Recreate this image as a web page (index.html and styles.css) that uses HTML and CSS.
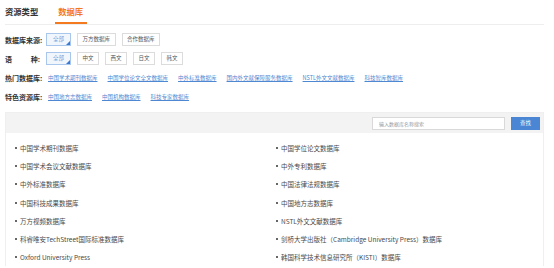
FILE: index.html
```html
<!DOCTYPE html>
<html lang="zh-CN">
<head>
<meta charset="utf-8">
<link rel="stylesheet" href="styles.css">
</head>
<body>
<div class="page">
  <div class="tabs">
    <div class="tab">资源类型</div>
    <div class="tab tab-active">数据库</div>
  </div>

  <div class="filters">
    <div class="frow">
      <div class="flabel">数据库来源:</div>
      <span class="opt opt-on">全部</span>
      <span class="opt">万方数据库</span>
      <span class="opt">合作数据库</span>
    </div>
    <div class="frow">
      <div class="flabel flabel-spread"><span>语</span><span>种:</span></div>
      <span class="opt opt-on">全部</span>
      <span class="opt">中文</span>
      <span class="opt">西文</span>
      <span class="opt">日文</span>
      <span class="opt">韩文</span>
    </div>
    <div class="frow">
      <div class="flabel">热门数据库:</div>
      <a class="lnk">中国学术期刊数据库</a>
      <a class="lnk">中国学位论文全文数据库</a>
      <a class="lnk">中外标准数据库</a>
      <a class="lnk">国内外文献保障服务数据库</a>
      <a class="lnk">NSTL外文文献数据库</a>
      <a class="lnk">科技智库数据库</a>
    </div>
    <div class="frow">
      <div class="flabel">特色资源库:</div>
      <a class="lnk">中国地方志数据库</a>
      <a class="lnk">中国机构数据库</a>
      <a class="lnk">科技专家数据库</a>
    </div>
  </div>

  <div class="panel">
    <div class="searchbar">
      <div class="sinput">输入数据库名称搜索</div>
      <div class="sbtn">查找</div>
    </div>
    <ul class="dblist">
      <li>中国学术期刊数据库</li>
      <li>中国学位论文数据库</li>
      <li>中国学术会议文献数据库</li>
      <li>中外专利数据库</li>
      <li>中外标准数据库</li>
      <li>中国法律法规数据库</li>
      <li>中国科技成果数据库</li>
      <li>中国地方志数据库</li>
      <li>万方视频数据库</li>
      <li>NSTL外文文献数据库</li>
      <li>科睿唯安TechStreet国际标准数据库</li>
      <li>剑桥大学出版社（Cambridge University Press）数据库</li>
      <li>Oxford University Press</li>
      <li>韩国科学技术信息研究所（KISTI）数据库</li>
    </ul>
  </div>
</div>
</body>
</html>
```

FILE: styles.css
```css
* { box-sizing: border-box; }
html, body {
  margin: 0;
  padding: 0;
  background: #fff;
}
body {
  font-family: "Noto Sans CJK SC", "Noto Sans", sans-serif;
  color: #333;
}
.page {
  padding: 1px 5px 0 5px;
  width: 549px;
}
.tabs {
  display: flex;
  border-bottom: 1px solid #eeeeee;
  height: 24px;
}
.tab {
  font-size: 8.3px;
  font-weight: bold;
  line-height: 21px;
  height: 23px;
  color: #333;
}
.tab-active {
  color: #f47a1f;
  border-bottom: 2px solid #f47a1f;
  margin-left: 17px;
  padding: 0 4px 0 3px;
}
.filters {
  padding-top: 5px;
}
.frow {
  display: flex;
  align-items: center;
  height: 19.2px;
}
.flabel {
  width: 41px;
  font-size: 7px;
  font-weight: bold;
  color: #333;
  flex: none;
  white-space: nowrap;
}
.flabel-spread {
  display: flex;
  justify-content: space-between;
  width: 35px;
  margin-right: 6px;
}
.opt {
  position: relative;
  height: 13px;
  line-height: 11px;
  border: 1px solid #dcdcdc;
  padding: 0 4.5px;
  font-size: 5.5px;
  color: #555;
  margin-right: 6px;
  background: #fff;
}
.opt-on {
  border-color: #a9c6ec;
  background: #f1f6fd;
  color: #6b98d6;
  padding: 0 6px;
}
.opt-on::after {
  content: "";
  position: absolute;
  right: 0;
  bottom: 0;
  border-style: solid;
  border-width: 0 0 4px 4px;
  border-color: transparent transparent #3b79d0 transparent;
}
.lnk {
  font-size: 5.5px;
  color: #4f88d2;
  text-decoration: underline;
  margin: 0 8px 0 2px;
  white-space: nowrap;
}
.panel {
  margin-top: 5.5px;
  border: 1px solid #efefef;
  border-bottom: none;
}
.searchbar {
  height: 20px;
  background: #f3f3f3;
  display: flex;
  align-items: center;
  justify-content: flex-end;
  padding-right: 3px;
}
.sinput {
  width: 133px;
  height: 13px;
  border: 1px solid #d9d9d9;
  background: #fff;
  font-size: 5px;
  line-height: 11px;
  color: #999;
  padding-left: 6px;
}
.sbtn {
  width: 29px;
  height: 13px;
  margin-left: 6px;
  background: #4a86d4;
  color: #fff;
  font-size: 5.5px;
  line-height: 13px;
  text-align: center;
}
.dblist {
  list-style: none;
  margin: 0;
  padding: 6px 0 0 9px;
  display: grid;
  grid-template-columns: 261px 1fr;
  grid-auto-rows: 18.1px;
}
.dblist li {
  display: flex;
  align-items: center;
  font-size: 6.5px;
  color: #4a4a4a;
  white-space: nowrap;
}
.dblist li::before {
  content: "";
  width: 2px;
  height: 2px;
  border-radius: 50%;
  background: #333;
  margin-right: 3px;
  flex: none;
}
```
